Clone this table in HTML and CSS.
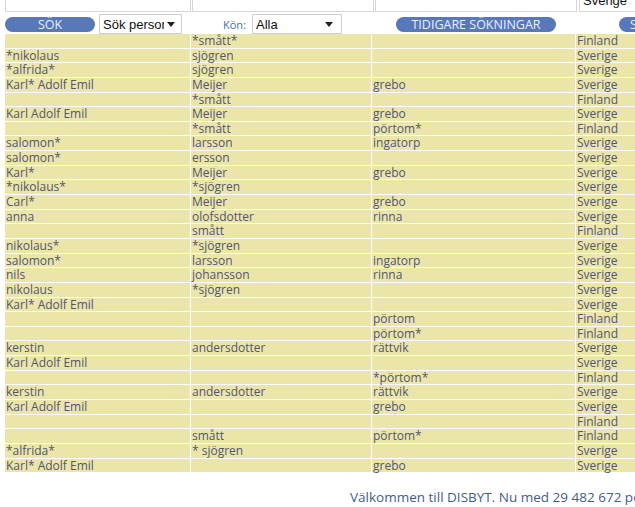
FILE: index.html
```html
<!DOCTYPE html>
<html lang="sv">
<head>
<meta charset="utf-8">
<title>DISBYT</title>
<link rel="stylesheet" href="styles.css">
</head>
<body>
<div class="page">
  <div class="inputs">
    <div class="field f1"></div>
    <div class="field f2"></div>
    <div class="field f3"></div>
    <div class="field f4"><span class="val">Sverige</span></div>
  </div>
  <div class="controls">
    <button class="pill sok">SÖK</button>
    <div class="select s-typ"><span class="stext">Sök personer</span><svg class="arrow" width="8" height="5" viewBox="0 0 8 5"><path d="M0 0h8L4 5z" fill="#222"/></svg></div>
    <label class="kon">Kön:</label>
    <div class="select s-kon"><span class="stext">Alla</span><svg class="arrow" width="8" height="5" viewBox="0 0 8 5"><path d="M0 0h8L4 5z" fill="#222"/></svg></div>
    <button class="pill tidigare">TIDIGARE SÖKNINGAR</button>
    <button class="pill extra">SPARADE</button>
  </div>
  <div class="results">
    <div class="c"></div><div class="c">*smått*</div><div class="c"></div><div class="c">Finland</div>
    <div class="c">*nikolaus</div><div class="c">sjögren</div><div class="c"></div><div class="c">Sverige</div>
    <div class="c">*alfrida*</div><div class="c">sjögren</div><div class="c"></div><div class="c">Sverige</div>
    <div class="c">Karl* Adolf Emil</div><div class="c">Meijer</div><div class="c">grebo</div><div class="c">Sverige</div>
    <div class="c"></div><div class="c">*smått</div><div class="c"></div><div class="c">Finland</div>
    <div class="c">Karl Adolf Emil</div><div class="c">Meijer</div><div class="c">grebo</div><div class="c">Sverige</div>
    <div class="c"></div><div class="c">*smått</div><div class="c">pörtom*</div><div class="c">Finland</div>
    <div class="c">salomon*</div><div class="c">larsson</div><div class="c">ingatorp</div><div class="c">Sverige</div>
    <div class="c">salomon*</div><div class="c">ersson</div><div class="c"></div><div class="c">Sverige</div>
    <div class="c">Karl*</div><div class="c">Meijer</div><div class="c">grebo</div><div class="c">Sverige</div>
    <div class="c">*nikolaus*</div><div class="c">*sjögren</div><div class="c"></div><div class="c">Sverige</div>
    <div class="c">Carl*</div><div class="c">Meijer</div><div class="c">grebo</div><div class="c">Sverige</div>
    <div class="c">anna</div><div class="c">olofsdotter</div><div class="c">rinna</div><div class="c">Sverige</div>
    <div class="c"></div><div class="c">smått</div><div class="c"></div><div class="c">Finland</div>
    <div class="c">nikolaus*</div><div class="c">*sjögren</div><div class="c"></div><div class="c">Sverige</div>
    <div class="c">salomon*</div><div class="c">larsson</div><div class="c">ingatorp</div><div class="c">Sverige</div>
    <div class="c">nils</div><div class="c">johansson</div><div class="c">rinna</div><div class="c">Sverige</div>
    <div class="c">nikolaus</div><div class="c">*sjögren</div><div class="c"></div><div class="c">Sverige</div>
    <div class="c">Karl* Adolf Emil</div><div class="c"></div><div class="c"></div><div class="c">Sverige</div>
    <div class="c"></div><div class="c"></div><div class="c">pörtom</div><div class="c">Finland</div>
    <div class="c"></div><div class="c"></div><div class="c">pörtom*</div><div class="c">Finland</div>
    <div class="c">kerstin</div><div class="c">andersdotter</div><div class="c">rättvik</div><div class="c">Sverige</div>
    <div class="c">Karl Adolf Emil</div><div class="c"></div><div class="c"></div><div class="c">Sverige</div>
    <div class="c"></div><div class="c"></div><div class="c">*pörtom*</div><div class="c">Finland</div>
    <div class="c">kerstin</div><div class="c">andersdotter</div><div class="c">rättvik</div><div class="c">Sverige</div>
    <div class="c">Karl Adolf Emil</div><div class="c"></div><div class="c">grebo</div><div class="c">Sverige</div>
    <div class="c"></div><div class="c"></div><div class="c"></div><div class="c">Finland</div>
    <div class="c"></div><div class="c">smått</div><div class="c">pörtom*</div><div class="c">Finland</div>
    <div class="c">*alfrida*</div><div class="c">* sjögren</div><div class="c"></div><div class="c">Sverige</div>
    <div class="c">Karl* Adolf Emil</div><div class="c"></div><div class="c">grebo</div><div class="c">Sverige</div>
  </div>
  <p class="welcome">Välkommen till DISBYT. Nu med 29 482 672 personer i databasen.</p>
</div>
</body>
</html>
```
FILE: styles.css
```css
html, body {
  margin: 0;
  padding: 0;
  background: #fff;
  overflow: hidden;
}
body {
  width: 635px;
  height: 507px;
}
.page {
  width: 760px;
  padding-left: 5px;
  font-family: "Open Sans", "Liberation Sans", sans-serif;
}
.inputs {
  display: grid;
  grid-template-columns: 186px 182px 202px 120px;
  column-gap: 1px;
  margin-top: -13px;
  height: 24px;
}
.field {
  border: 1px solid #d6d6d6;
  border-top: none;
  background: #fff;
  box-sizing: border-box;
}
.f4 {
  margin-left: 1px;
  padding: 4px 0 0 3px;
  font-family: "Liberation Sans", Arial, sans-serif;
  font-size: 13px;
  line-height: 20px;
  color: #111;
}
.controls {
  display: flex;
  align-items: center;
  height: 20px;
  margin-top: 3px;
}
.pill {
  height: 15px;
  border: none;
  border-radius: 8px;
  background: #5878b8;
  color: #e8eef9;
  font-family: "Open Sans", "Liberation Sans", sans-serif;
  font-size: 12.5px;
  line-height: 15px;
  padding: 0;
  text-align: center;
  flex: none;
}
.sok { width: 90px; }
.tidigare { width: 160px; margin-left: 54px; }
.extra { width: 100px; margin-left: 63px; text-align: left; padding-left: 11px; }
.select {
  box-sizing: border-box;
  height: 20px;
  border: 1px solid #cfcfcf;
  background: #fff;
  display: flex;
  align-items: center;
  padding: 0 6px 0 3px;
  font-family: "Liberation Sans", Arial, sans-serif;
  font-size: 13px;
  color: #111;
  flex: none;
  gap: 3px;
}
.stext {
  flex: 1;
  overflow: hidden;
  white-space: nowrap;
}
.arrow { flex: none; }
.s-typ { width: 83px; margin-left: 4px; }
.s-kon { width: 90px; margin-left: 4px; padding-right: 8px; }
.kon {
  margin-left: 41px;
  font-size: 11px;
  color: #4a6db0;
  width: 25px;
}
.results {
  display: grid;
  grid-template-columns: 185px 180px 203px 120px;
  grid-auto-rows: 13.65px;
  gap: 1px;
}
.c {
  background: #ece5a9;
  color: #4f566e;
  font-size: 12px;
  line-height: 13.65px;
  padding-left: 1px;
  white-space: nowrap;
}
.welcome {
  margin: 16px 0 0 345px;
  white-space: nowrap;
  font-size: 13.5px;
  color: #3f5d8c;
}
```
